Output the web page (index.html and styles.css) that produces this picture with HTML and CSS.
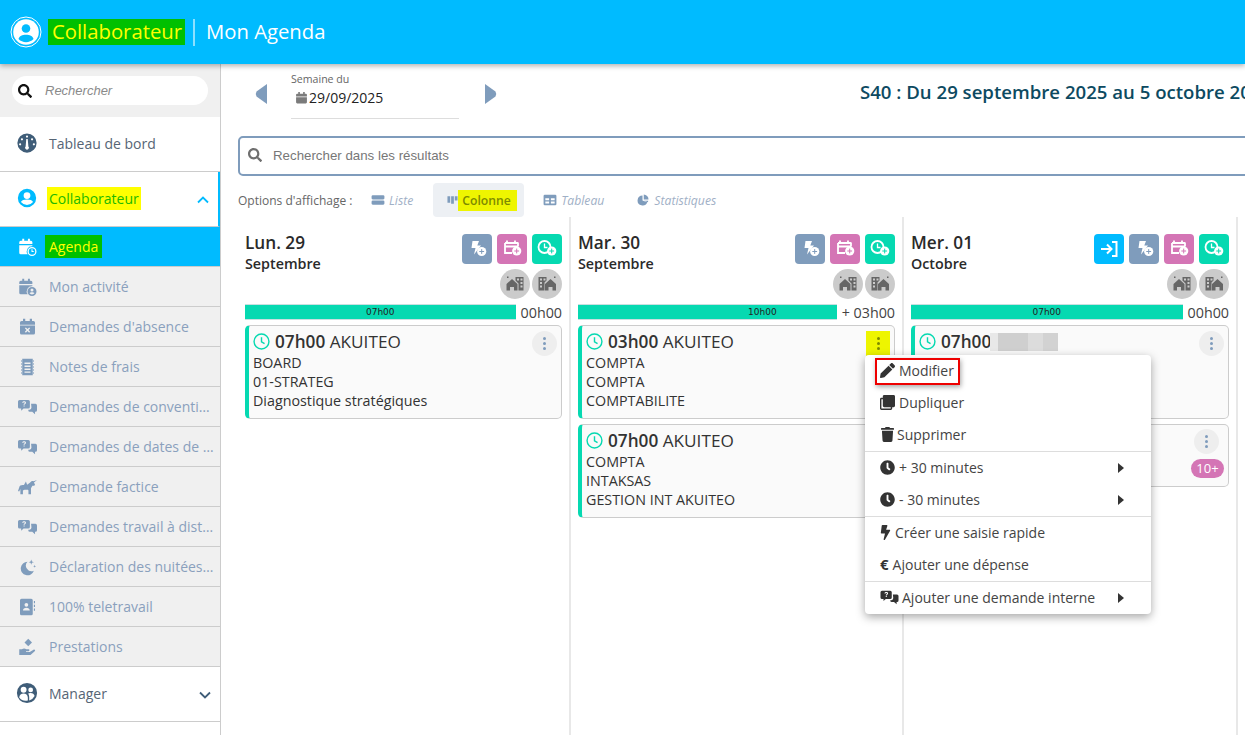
FILE: index.html
```html
<!DOCTYPE html>
<html lang="fr">
<head>
<meta charset="utf-8">
<title>Mon Agenda</title>
<link rel="stylesheet" href="styles.css">
</head>
<body>
<svg class="defs" width="0" height="0">
  <symbol id="i-search" viewBox="0 0 512 512"><path d="M505 442.7L405.3 343c-4.5-4.5-10.6-7-17-7H372c27.6-35.3 44-79.7 44-128C416 93.1 322.9 0 208 0S0 93.1 0 208s93.1 208 208 208c48.3 0 92.7-16.4 128-44v16.3c0 6.4 2.5 12.5 7 17l99.7 99.7c9.4 9.4 24.6 9.4 33.9 0l28.3-28.3c9.4-9.4 9.4-24.6.1-34zM208 336c-70.7 0-128-57.2-128-128 0-70.7 57.2-128 128-128 70.7 0 128 57.2 128 128 0 70.7-57.2 128-128 128z"/></symbol>
  <symbol id="i-user" viewBox="0 0 24 24"><path fill-rule="evenodd" d="M12 2a10 10 0 1 0 0 20 10 10 0 0 0 0-20zm0 3.6a3.7 3.7 0 1 1 0 7.4 3.7 3.7 0 0 1 0-7.4zM5.4 16.3c.6-2 3.3-2.8 6.6-2.8s6 .8 6.6 2.8a8.4 8.4 0 0 1-13.2 0z"/></symbol>
  <symbol id="i-gauge" viewBox="0 0 24 24"><path fill-rule="evenodd" d="M12 1.500a10.500 10.500 0 1 0 0 21 10.500 10.500 0 0 0 0-21zm0 2.300a1.200 1.200 0 1 1 0 2.400 1.200 1.200 0 0 1 0-2.400zM6.500 6.800a1.200 1.200 0 1 1 0 2.400 1.200 1.200 0 0 1 0-2.400zm11 0a1.200 1.200 0 1 1 0 2.400 1.200 1.200 0 0 1 0-2.400zM4.500 12.200a1.200 1.200 0 1 1 0 2.400 1.200 1.200 0 0 1 0-2.400zm15 0a1.200 1.200 0 1 1 0 2.400 1.200 1.200 0 0 1 0-2.400zM11.200 7.500h1.600l.7 8.200a2.100 2.100 0 1 1-3 0z"/></symbol>
  <symbol id="i-cal" viewBox="0 0 24 24"><path d="M6 1h3v3h6V1h3v3h2a2 2 0 0 1 2 2v3H2V6a2 2 0 0 1 2-2h2zM2 10.500h20V20a2 2 0 0 1-2 2H4a2 2 0 0 1-2-2z"/></symbol>
  <symbol id="i-calclock" viewBox="0 0 24 24"><path d="M5 1h2.600v2.500h5V1h2.600v2.500h1.300A2 2 0 0 1 18.500 5.500V8H1V5.500a2 2 0 0 1 2-2h2zM1 9.500h17.500V11a6.700 6.700 0 0 0-6.300 10.500H3a2 2 0 0 1-2-2z"/><path fill-rule="evenodd" d="M18 12a6 6 0 1 0 0 12 6 6 0 0 0 0-12zm0 1.700a4.300 4.300 0 1 1 0 8.600 4.300 4.300 0 0 1 0-8.600zm-.7 1.300v3.500h3v-1.300h-1.600V15z"/></symbol>
  <symbol id="i-caluser" viewBox="0 0 24 24"><path d="M5 1h2.600v2.500h5V1h2.600v2.500h1.300A2 2 0 0 1 18.500 5.500V8H1V5.500a2 2 0 0 1 2-2h2zM1 9.500h17.500V11a6.700 6.700 0 0 0-6.300 10.500H3a2 2 0 0 1-2-2z"/><path fill-rule="evenodd" d="M18 12a6 6 0 1 0 0 12 6 6 0 0 0 0-12zm0 2a2 2 0 1 1 0 4 2 2 0 0 1 0-4zm-3.300 6.400c.6-1.100 1.900-1.500 3.300-1.500s2.700.4 3.300 1.500a4.400 4.400 0 0 1-6.600 0z"/></symbol>
  <symbol id="i-calx" viewBox="0 0 24 24"><path fill-rule="evenodd" d="M6 1h3v3h6V1h3v3h2a2 2 0 0 1 2 2v3H2V6a2 2 0 0 1 2-2h2zM2 10h20v10a2 2 0 0 1-2 2H4a2 2 0 0 1-2-2zm7.800 2.500L8.500 13.800l2.200 2.200-2.200 2.200 1.300 1.300 2.200-2.200 2.200 2.200 1.300-1.300-2.200-2.200 2.200-2.200-1.300-1.300-2.200 2.200z"/></symbol>
  <symbol id="i-receipt" viewBox="0 0 24 24"><path fill-rule="evenodd" d="M5 1h14v22H5zm3 5v2h8V6zm0 4v2h8v-2zm0 4v2h8v-2zm0 4v1.500h8V18z"/><path d="M3.500 3h1v2h-1zm0 4h1v2h-1zm0 4h1v2h-1zm0 4h1v2h-1zm0 4h1v2h-1zm16-16h1v2h-1zm0 4h1v2h-1zm0 4h1v2h-1zm0 4h1v2h-1zm0 4h1v2h-1z"/></symbol>
  <symbol id="i-chat" viewBox="0 0 24 20"><path fill-rule="evenodd" d="M2 1h11a2 2 0 0 1 2 2v7a2 2 0 0 1-2 2H7l-3 2.600V12H2a2 2 0 0 1-2-2V3a2 2 0 0 1 2-2zm5.700 1.800C6.300 2.800 5.300 3.500 5.300 4.700h1.400c0-.4.400-.7 1-.7s1 .3 1 .7c0 .8-1.700.9-1.700 2.500h1.400c0-1 1.700-1.200 1.700-2.600 0-1.100-1-1.800-2.400-1.800zM7 8v1.400h1.400V8z"/><path d="M16.500 6H22a2 2 0 0 1 2 2v6a2 2 0 0 1-2 2h-.5v3l-3.500-3h-3a2 2 0 0 1-2-2v-.5h1.500a3 3 0 0 0 2.500-3z"/></symbol>
  <symbol id="i-unicorn" viewBox="0 0 24 20"><path d="M24 1l-4.200 1.700c-.8-.5-1.800-.6-2.800 0L15 4.500 11.500 7l-1.500-4-2.500 4.500H6C3.500 7.500 2 8.500 1.500 10.500L0 15l1.500.8L3 12.500V19h3.200v-4.500l2-1h4.300l.7 1V19h3.200v-7.500l1.800-3h2.300l1-1.500-1.300-2.600z"/></symbol>
  <symbol id="i-moon" viewBox="0 0 24 24"><path d="M12 5a9 9 0 1 0 8.500 12A7.500 7.500 0 0 1 12 5z"/><path d="M17 2l.9 2.600 2.600.9-2.600.9-.9 2.600-.9-2.600-2.600-.9 2.600-.9zM21.500 9l.5 1.500 1.500.5-1.500.5-.5 1.500-.5-1.500-1.500-.5 1.500-.5z"/></symbol>
  <symbol id="i-book" viewBox="0 0 24 24"><path fill-rule="evenodd" d="M4 1h13a2 2 0 0 1 2 2v18a2 2 0 0 1-2 2H4a2 2 0 0 1-2-2V3a2 2 0 0 1 2-2zm6.500 5.500a2.500 2.500 0 1 0 0 5 2.500 2.500 0 0 0 0-5zM6 16.500h9c0-2-2-3.500-4.500-3.500S6 14.500 6 16.500z"/><path d="M20.500 4H22v3h-1.500zm0 5H22v3h-1.500zm0 5H22v3h-1.500z"/></symbol>
  <symbol id="i-hand" viewBox="0 0 24 24"><path d="M13 1l5 5-5 5-5-5z"/><path d="M1 15h3.500c2-1.500 4-1.500 6 0h3c1.500 0 1.500 2.500 0 2.500H10v1h5l5-3c1.500-.8 3 1 1.600 2.200L16 22.500H1z"/></symbol>
  <symbol id="i-people" viewBox="0 0 24 24"><path fill-rule="evenodd" d="M12 1a11 11 0 1 0 0 22 11 11 0 0 0 0-22zM8.300 5.300a3.200 3.200 0 1 1 0 6.400 3.200 3.200 0 0 1 0-6.400zm7.700.7a2.600 2.600 0 1 1 0 5.200 2.600 2.600 0 0 1 0-5.200zM3.500 17c.2-3 2.200-4.500 4.800-4.500s4.400 1.500 4.600 4.500v3.200a9 9 0 0 1-9.400-3.200zM14.300 12.300c.5-.2 1.100-.3 1.700-.3 2.200 0 3.800 1.200 4.300 3.400a9 9 0 0 1-5.900 4.700V17c0-2-.3-3.500-1.300-4.200z"/></symbol>
  <symbol id="i-columns" viewBox="0 0 24 20"><path d="M1 2h6v14H1zm8 0h6v16H9zm8 0h6v9h-6z"/></symbol>
  <symbol id="i-list" viewBox="0 0 24 20"><rect x="1" y="2" width="22" height="7" rx="2"/><rect x="1" y="11" width="22" height="7" rx="2"/></symbol>
  <symbol id="i-table" viewBox="0 0 24 20"><path fill-rule="evenodd" d="M3 1h18a2 2 0 0 1 2 2v14a2 2 0 0 1-2 2H3a2 2 0 0 1-2-2V3a2 2 0 0 1 2-2zm1 6v3.500h6.500V7zm9.500 0v3.500H20V7zM4 12.500V16h6.500v-3.500zm9.500 0V16H20v-3.500z"/></symbol>
  <symbol id="i-pie" viewBox="0 0 24 24"><path d="M11 3a10 10 0 1 0 9.500 13.500L11 13z"/><path d="M13.500 1A10 10 0 0 1 23 11h-9.500z"/><path d="M14 13.500h8.500a10 10 0 0 1-1 3z"/></symbol>
  <symbol id="i-boltplus" viewBox="0 0 30 30"><path d="M10.500 7h6.500l-1.700 4.500h3.700L12 20.500l1.500-6.500H9.500z" fill="#fff"/><circle cx="19.700" cy="17.500" r="4.600" fill="#fff"/><path d="M17.300 17.500h4.800M19.700 15.100v4.800" stroke="#7f9cbc" stroke-width="1"/></symbol>
  <symbol id="i-calplus" viewBox="0 0 30 30"><path d="M10 6.500v3M18 6.500v3" stroke="#fff" stroke-width="1.800"/><path d="M8 9h13.500M8 12.500h13.500M8 9v10h7M21 9v3" fill="none" stroke="#fff" stroke-width="1.800"/><circle cx="19.700" cy="17" r="4.600" fill="#fff"/><path d="M17.300 17h4.800M19.700 14.600v4.800" stroke="#d475b5" stroke-width="1"/></symbol>
  <symbol id="i-clockplus" viewBox="0 0 30 30"><circle cx="12.500" cy="13" r="6" fill="none" stroke="#fff" stroke-width="1.800"/><path d="M12.500 9.500V13.500h3" fill="none" stroke="#fff" stroke-width="1.300"/><circle cx="19.700" cy="17" r="4.600" fill="#fff"/><path d="M17.300 17h4.800M19.700 14.600v4.800" stroke="#06d9b1" stroke-width="1"/></symbol>
  <symbol id="i-login" viewBox="0 0 30 30"><path d="M7 15h10M13 10.500l4.500 4.500-4.500 4.500M18 8h4.500v14H18" fill="none" stroke="#fff" stroke-width="2"/></symbol>
  <symbol id="i-homeoff" viewBox="0 0 30 30"><path d="M6.500 15l5.500-5 5.500 5v6.500h-3.500v-3.500h-4v3.500H6.500z"/><path d="M15.500 8h8v13.500h-5v-7L15.500 11.500z"/><path d="M17 9.500h2v2h-2zm3.500 0h2v2h-2zm0 3.500h2v2h-2zm0 3.500h2v2h-2z" fill="#cbcbcb"/><path d="M7 7.500h1.500V9H7z"/></symbol>
  <symbol id="i-offhome" viewBox="0 0 30 30"><path d="M6.500 8h8v3.500L12.500 13.500v8h-6z"/><path d="M8 9.500h2v2H8zm3.500 0h2v2h-2zM8 13h2v2H8zm0 3.500h2v2H8z" fill="#cbcbcb"/><path d="M13 15l5.500-5 5.500 5v6.500h-3.500v-3.500h-4v3.500H13z"/><path d="M22 7.500h1.500V9H22z"/></symbol>
  <symbol id="i-clock-o" viewBox="0 0 24 24"><circle cx="12" cy="12" r="10.500" fill="none" stroke="currentColor" stroke-width="2"/><path d="M12 6v6.500l4.300 2.600" fill="none" stroke="currentColor" stroke-width="2"/></symbol>
  <symbol id="i-pencil" viewBox="0 0 512 512"><path d="M497.900 142.100l-46.100 46.100c-4.700 4.700-12.300 4.700-17 0l-111-111c-4.700-4.700-4.700-12.300 0-17l46.100-46.100c18.700-18.700 49.100-18.700 67.900 0l60.100 60.100c18.800 18.700 18.800 49.100 0 67.900zM284.200 99.800L21.600 362.400.4 483.900c-2.900 16.400 11.400 30.600 27.800 27.800l121.500-21.300 262.600-262.600c4.700-4.700 4.700-12.300 0-17l-111-111c-4.800-4.700-12.400-4.700-17.100 0z"/></symbol>
  <symbol id="i-clone" viewBox="0 0 512 512"><path d="M464 0H144c-26.500 0-48 21.500-48 48v48H48c-26.500 0-48 21.500-48 48v320c0 26.500 21.500 48 48 48h320c26.500 0 48-21.500 48-48v-48h48c26.500 0 48-21.500 48-48V48c0-26.500-21.500-48-48-48zM362 464H54a6 6 0 0 1-6-6V150a6 6 0 0 1 6-6h42v224c0 26.500 21.500 48 48 48h224v42a6 6 0 0 1-6 6z"/></symbol>
  <symbol id="i-trash" viewBox="0 0 448 512"><path d="M432 32H312l-9.400-18.700A24 24 0 0 0 281.100 0H166.800a23.720 23.720 0 0 0-21.400 13.300L136 32H16A16 16 0 0 0 0 48v32a16 16 0 0 0 16 16h416a16 16 0 0 0 16-16V48a16 16 0 0 0-16-16zM53.200 467a48 48 0 0 0 47.900 45h245.800a48 48 0 0 0 47.900-45L416 128H32z"/></symbol>
  <symbol id="i-clock" viewBox="0 0 512 512"><path d="M256 8C119 8 8 119 8 256s111 248 248 248 248-111 248-248S393 8 256 8zm92.490 313l-20 25a16 16 0 0 1-22.490 2.500l-67-49.720a40 40 0 0 1-15-31.230V112a16 16 0 0 1 16-16h32a16 16 0 0 1 16 16v144l58 42.500a16 16 0 0 1 2.490 22.500z"/></symbol>
  <symbol id="i-bolt" viewBox="0 0 320 512"><path d="M296 160H180.600l42.600-129.800C227.200 15 215.700 0 200 0H56C44 0 33.800 8.900 32.200 20.800l-32 240C-1.700 275.200 9.500 288 24 288h118.700L96.600 482.500c-3.600 15.200 8 29.500 23.300 29.500 8.400 0 16.400-4.400 20.800-12l176-304c9.300-15.900-2.200-36-20.700-36z"/></symbol>
</svg>

<header class="topbar">
  <svg class="logo" viewBox="0 0 32 32"><circle cx="16" cy="16" r="15" fill="none" stroke="#fff" stroke-width="1"/><circle cx="16" cy="16" r="12.800" fill="#fff"/><circle cx="16" cy="12.500" r="4.300" fill="#00bbff"/><path d="M8.500 23c.8-3 3.800-4.300 7.500-4.300s6.700 1.300 7.500 4.300a10.500 10.500 0 0 1-15 0z" fill="#00bbff"/></svg>
  <span class="top-module">Collaborateur</span>
  <span class="top-sep"></span>
  <span class="top-title">Mon Agenda</span>
</header>

<div class="layout">
  <aside class="sidebar">
    <div class="side-search">
      <div class="side-search-box">
        <svg class="ico14 black"><use href="#i-search"/></svg>
        <span class="side-search-text">Rechercher</span>
      </div>
    </div>
    <nav>
      <div class="nav-main"><svg class="nav-ico dark"><use href="#i-gauge"/></svg><span>Tableau de bord</span></div>
      <div class="nav-main nav-open">
        <svg class="nav-ico cyan"><use href="#i-user"/></svg>
        <span class="hl-yellow-green">Collaborateur</span>
        <svg class="chev" viewBox="0 0 12 8"><path d="M1 6.500l5-5 5 5" fill="none" stroke="#00bbff" stroke-width="1.800"/></svg>
      </div>
      <div class="nav-sub nav-active"><svg class="sub-ico"><use href="#i-calclock"/></svg><span class="hl-green">Agenda</span></div>
      <div class="nav-sub"><svg class="sub-ico"><use href="#i-caluser"/></svg><span>Mon activité</span></div>
      <div class="nav-sub"><svg class="sub-ico"><use href="#i-calx"/></svg><span>Demandes d'absence</span></div>
      <div class="nav-sub"><svg class="sub-ico"><use href="#i-receipt"/></svg><span>Notes de frais</span></div>
      <div class="nav-sub"><svg class="sub-ico"><use href="#i-chat"/></svg><span class="ellip">Demandes de conventions</span></div>
      <div class="nav-sub"><svg class="sub-ico"><use href="#i-chat"/></svg><span class="ellip">Demandes de dates de formation</span></div>
      <div class="nav-sub"><svg class="sub-ico"><use href="#i-unicorn"/></svg><span>Demande factice</span></div>
      <div class="nav-sub"><svg class="sub-ico"><use href="#i-chat"/></svg><span class="ellip">Demandes travail à distance</span></div>
      <div class="nav-sub"><svg class="sub-ico"><use href="#i-moon"/></svg><span class="ellip">Déclaration des nuitées hors</span></div>
      <div class="nav-sub"><svg class="sub-ico"><use href="#i-book"/></svg><span>100% teletravail</span></div>
      <div class="nav-sub"><svg class="sub-ico"><use href="#i-hand"/></svg><span>Prestations</span></div>
      <div class="nav-main">
        <svg class="nav-ico dark"><use href="#i-people"/></svg><span>Manager</span>
        <svg class="chev" viewBox="0 0 12 8"><path d="M1 1.500l5 5 5-5" fill="none" stroke="#3f5d78" stroke-width="1.800"/></svg>
      </div>
    </nav>
  </aside>

  <main class="content">
    <div class="week-bar">
      <svg class="week-arrow" viewBox="0 0 12 20"><path d="M12 0v20L1.500 12.500Q0 10 1.500 7.500z"/></svg>
      <div class="week-field">
        <div class="week-label">Semaine du</div>
        <div class="week-date"><svg class="ico13 gray"><use href="#i-cal"/></svg>29/09/2025</div>
      </div>
      <svg class="week-arrow" viewBox="0 0 12 20"><path d="M0 0v20l10.500-7.500Q12 10 10.500 7.500z"/></svg>
      <h1 class="week-title">S40 : Du 29 septembre 2025 au 5 octobre 2025</h1>
    </div>

    <div class="result-search">
      <svg class="ico14 graysearch"><use href="#i-search"/></svg>
      <span>Rechercher dans les résultats</span>
    </div>

    <div class="view-options">
      <span class="view-label">Options d'affichage :</span>
      <span class="view-tab"><svg class="view-ico"><use href="#i-list"/></svg><i>Liste</i></span>
      <span class="view-tab view-on"><svg class="view-ico"><use href="#i-columns"/></svg><b>Colonne</b></span>
      <span class="view-tab"><svg class="view-ico"><use href="#i-table"/></svg><i>Tableau</i></span>
      <span class="view-tab"><svg class="view-ico"><use href="#i-pie"/></svg><i>Statistiques</i></span>
    </div>

    <div class="columns">
      <section class="col">
        <div class="col-head">
          <div class="col-date"><div class="col-day">Lun. 29</div><div class="col-month">Septembre</div></div>
          <div class="col-actions">
            <div class="btn-row">
              <span class="sq slate"><svg><use href="#i-boltplus"/></svg></span>
              <span class="sq pink"><svg><use href="#i-calplus"/></svg></span>
              <span class="sq teal"><svg><use href="#i-clockplus"/></svg></span>
            </div>
            <div class="btn-row gap2">
              <span class="rd"><svg><use href="#i-homeoff"/></svg></span>
              <span class="rd"><svg><use href="#i-offhome"/></svg></span>
            </div>
          </div>
        </div>
        <div class="progress"><div class="bar">07h00</div><span class="bar-val">00h00</span></div>
        <article class="card">
          <div class="card-top"><svg class="card-clock"><use href="#i-clock-o"/></svg><b>07h00</b> AKUITEO</div>
          <div>BOARD</div><div>01-STRATEG</div><div>Diagnostique stratégiques</div>
          <span class="dots"><i></i><i></i><i></i></span>
        </article>
      </section>

      <section class="col">
        <div class="col-head">
          <div class="col-date"><div class="col-day">Mar. 30</div><div class="col-month">Septembre</div></div>
          <div class="col-actions">
            <div class="btn-row">
              <span class="sq slate"><svg><use href="#i-boltplus"/></svg></span>
              <span class="sq pink"><svg><use href="#i-calplus"/></svg></span>
              <span class="sq teal"><svg><use href="#i-clockplus"/></svg></span>
            </div>
            <div class="btn-row gap2">
              <span class="rd"><svg><use href="#i-homeoff"/></svg></span>
              <span class="rd"><svg><use href="#i-offhome"/></svg></span>
            </div>
          </div>
        </div>
        <div class="progress"><div class="bar bar-over">10h00</div><span class="bar-val">+ 03h00</span></div>
        <article class="card">
          <div class="card-top"><svg class="card-clock"><use href="#i-clock-o"/></svg><b>03h00</b> AKUITEO</div>
          <div>COMPTA</div><div>COMPTA</div><div>COMPTABILITE</div>
          <span class="dots dots-hl"><i></i><i></i><i></i></span>
        </article>
        <article class="card">
          <div class="card-top"><svg class="card-clock"><use href="#i-clock-o"/></svg><b>07h00</b> AKUITEO</div>
          <div>COMPTA</div><div>INTAKSAS</div><div>GESTION INT AKUITEO</div>
        </article>
      </section>

      <section class="col">
        <div class="col-head">
          <div class="col-date"><div class="col-day">Mer. 01</div><div class="col-month">Octobre</div></div>
          <div class="col-actions">
            <div class="btn-row">
              <span class="sq cyanbg"><svg><use href="#i-login"/></svg></span>
              <span class="sq slate"><svg><use href="#i-boltplus"/></svg></span>
              <span class="sq pink"><svg><use href="#i-calplus"/></svg></span>
              <span class="sq teal"><svg><use href="#i-clockplus"/></svg></span>
            </div>
            <div class="btn-row gap2">
              <span class="rd"><svg><use href="#i-homeoff"/></svg></span>
              <span class="rd"><svg><use href="#i-offhome"/></svg></span>
            </div>
          </div>
        </div>
        <div class="progress"><div class="bar">07h00</div><span class="bar-val">00h00</span></div>
        <article class="card">
          <div class="card-top"><svg class="card-clock"><use href="#i-clock-o"/></svg><b>07h00</b> <span class="blurred"></span></div>
          <span class="dots"><i></i><i></i><i></i></span>
        </article>
        <article class="card card-small">
          <span class="dots dots-small"><i></i><i></i><i></i></span>
          <span class="badge">10+</span>
        </article>
      </section>

      <section class="col col-last"><div class="col-day">-</div></section>
    </div>

    <div class="menu">
      <div class="menu-row menu-mark"><span class="mark-box"><svg class="m-ico"><use href="#i-pencil"/></svg>Modifier</span></div>
      <div class="menu-row"><svg class="m-ico"><use href="#i-clone"/></svg>Dupliquer</div>
      <div class="menu-row"><svg class="m-ico m-narrow"><use href="#i-trash"/></svg>Supprimer</div>
      <div class="menu-line"></div>
      <div class="menu-row"><svg class="m-ico"><use href="#i-clock"/></svg>+ 30 minutes<span class="caret"></span></div>
      <div class="menu-row"><svg class="m-ico"><use href="#i-clock"/></svg>- 30 minutes<span class="caret"></span></div>
      <div class="menu-line"></div>
      <div class="menu-row"><svg class="m-ico m-bolt"><use href="#i-bolt"/></svg>Créer une saisie rapide</div>
      <div class="menu-row"><b class="euro">€</b>Ajouter une dépense</div>
      <div class="menu-line"></div>
      <div class="menu-row"><svg class="m-ico m-chat"><use href="#i-chat"/></svg>Ajouter une demande interne<span class="caret"></span></div>
    </div>
  </main>
</div>
</body>
</html>
```
FILE: styles.css
```css
* { box-sizing: border-box; }
html, body { margin: 0; height: 100%; overflow: hidden; }
body { font-family: "Open Sans", sans-serif; font-size: 14px; color: #333; background: #fff; width: 1245px; height: 735px; position: relative; }
.defs { position: absolute; }
svg { fill: currentColor; display: block; flex: none; }

.topbar { height: 64px; background: #00bbff; display: flex; align-items: center; padding-left: 10px; color: #fff; box-shadow: 0 2px 5px rgba(0,0,0,.3); position: relative; z-index: 3; }
.logo { width: 32px; height: 32px; margin-right: 6px; }
.top-module { background: #00c000; color: #ffff00; font-size: 20.300px; line-height: 25px; padding: 0 0 1px 4px; width: 137px; white-space: nowrap; }
.top-sep { width: 2px; height: 27px; background: rgba(255,255,255,.55); margin: 0 11px 0 8px; }
.top-title { font-size: 20.300px; margin-top: -2px; }

.layout { display: flex; height: 671px; }
.sidebar { width: 221px; flex: none; border-right: 1px solid #ccc; background: #fff; height: 671px; overflow: hidden; }
.side-search { height: 53px; background: #f0f0f0; padding: 12px 12px 0; }
.side-search-box { height: 29px; width: 196px; background: #fff; border-radius: 15px; display: flex; align-items: center; padding-left: 6px; }
.side-search-text { font-family: "Liberation Sans", sans-serif; font-style: italic; font-size: 13px; color: #8a8a8a; margin-left: 13px; }
.ico14 { width: 14px; height: 14px; }
.ico13 { width: 13px; height: 14px; }
.black { color: #111; }
.gray { color: #7b7b7b; }
.graysearch { color: #6f6f6f; }

.nav-main { height: 55px; display: flex; align-items: center; padding-left: 16px; color: #566575; border-bottom: 1px solid #ccc; font-size: 14px; position: relative; padding-bottom: 2px; }
.nav-open { color: #00bbff; border-right: 2px solid #00bbff; }
.nav-ico { width: 22px; height: 22px; margin-right: 11px; }
.dark { color: #3f5d78; }
.cyan { color: #00bbff; }
.chev { width: 12px; height: 8px; position: absolute; right: 9px; top: 24px; }
.hl-yellow-green { background: #ffff00; color: #22b800; margin-left: -2px; padding: 0 2px; line-height: 23px; }
.nav-sub { height: 40px; display: flex; align-items: center; background: #f0f0f0; color: #8aa0bd; padding-left: 18px; border-bottom: 1px solid #ccc; font-size: 14px; }
.sub-ico { width: 19px; height: 18px; margin-right: 12px; color: #7f9cbc; }
.nav-active { background: #00bbff; height: 40px; border-bottom-color: #ccc; }
.nav-active .sub-ico { color: #fff; }
.hl-green { background: #00c000; color: #ffff00; margin-left: -4px; padding: 0 4px; line-height: 23px; }
.ellip { width: 165px; white-space: nowrap; overflow: hidden; text-overflow: ellipsis; }

.content { flex: 1; min-width: 0; padding-left: 17px; position: relative; overflow: hidden; }
.week-bar { height: 72px; display: flex; align-items: flex-start; white-space: nowrap; padding-left: 17px; }
.week-arrow { width: 12px; height: 20px; color: #7f9cbc; margin-top: 20px; flex: none; }
.week-field { flex: none; width: 168px; height: 55px; border-bottom: 1px solid #ddd; margin: 0 26px 0 24px; padding-top: 8px; }
.week-label { font-size: 10.600px; color: #666; line-height: 14px; }
.week-date { display: flex; align-items: center; gap: 1px; font-size: 14px; color: #222; line-height: 24px; padding-left: 4px; }
.week-title { flex: none; margin: 16px 0 0 363px; font-size: 18.600px; font-weight: 600; color: #0d4a61; line-height: 24px; }
.result-search { width: 1100px; height: 40px; border: 2px solid #7f9cbc; border-radius: 5px; display: flex; align-items: center; padding: 0 0 2px 8px; gap: 11px; font-family: "Liberation Sans", sans-serif; font-size: 13.300px; color: #777; }
.view-options { height: 34px; margin-top: 7px; display: flex; align-items: center; font-size: 12px; color: #666; }
.view-label { width: 126px; white-space: nowrap; }
.view-tab { display: flex; align-items: center; height: 34px; padding: 0 7px; gap: 4px; color: #9fb0c6; }
.view-tab i { font-size: 12.200px; }
.view-tab:nth-child(2) { margin-right: 13px; }
.view-tab:nth-child(4) { margin: 0 18px 0 12px; }
.view-ico { width: 14px; height: 12px; color: #7f9cbc; }
.view-on { background: #edf0f4; border-radius: 4px; width: 91px; padding-left: 14px; gap: 0; }
.view-on .view-ico { width: 11px; }
.view-on b { background: #eef500; color: #7d8a00; font-weight: 600; font-size: 12.200px; padding: 3px 6px 3px 4px; line-height: 15px; }

.columns { display: flex; width: 1340px; height: 518px; }
.col { width: 333px; flex: none; padding: 17px 7px 0; border-right: 2px solid #e8e8e8; }
.col:nth-child(3) { width: 334px; }
.col-last { border: 0; }
.col-head { display: flex; justify-content: space-between; height: 70px; }
.col-date { margin-top: -1px; }
.col-day { font-size: 17.200px; font-weight: 600; color: #2a2a2a; line-height: 20px; }
.col-month { font-size: 14.300px; font-weight: 600; color: #2a2a2a; line-height: 22px; }
.col-actions { display: flex; flex-direction: column; gap: 5px; align-items: flex-end; }
.btn-row { display: flex; gap: 5px; }
.gap2 { gap: 2px; }
.sq { width: 30px; height: 30px; border-radius: 4px; display: flex; align-items: center; justify-content: center; }
.sq svg { width: 30px; height: 30px; }
.slate { background: #7f9cbc; }
.pink { background: #d475b5; }
.teal { background: #06d9b1; }
.cyanbg { background: #00bbff; }
.rd { width: 30px; height: 30px; border-radius: 50%; background: #cbcbcb; display: flex; align-items: center; justify-content: center; color: #666; }
.rd svg { width: 30px; height: 30px; }
.progress { display: flex; align-items: center; justify-content: space-between; height: 16px; margin-bottom: 5px; }
.bar { flex: 1; height: 16px; background: #06d9b1; font-family: "DejaVu Sans", sans-serif; font-size: 9px; line-height: 14px; text-align: center; color: #222; border: 1px solid #c9dfe0; border-width: 1px 0; }
.bar-over { text-align: left; padding-left: 170px; }
.bar-val { font-size: 14.300px; color: #444; margin-left: 5px; }
.card { position: relative; height: 94px; margin-bottom: 5px; background: #fafafa; border: 1px solid #ccc; border-left: 4px solid #06d9b1; border-radius: 5px; padding: 4px 0 0 4px; font-size: 14.300px; line-height: 19px; color: #333; }
.card-top { display: flex; align-items: center; font-size: 17.200px; line-height: 24px; height: 23px; white-space: pre; }
.card-top b { font-weight: 600; }
.card-clock { width: 17px; height: 17px; color: #06d9b1; margin-right: 5px; }
.blurred { display: inline-block; width: 68px; height: 18px; margin-left: -1px; background: linear-gradient(90deg,#e8e8e8 0 8px,#cfcfcf 8px 38px,#dcdcdc 38px 53px,#d2d2d2 53px 68px); }
.dots { position: absolute; right: 4px; top: 5px; width: 25px; height: 25px; border-radius: 50%; background: #eee; display: flex; flex-direction: column; align-items: center; justify-content: center; gap: 2px; }
.dots i { width: 3px; height: 3px; border-radius: 50%; background: #7f9cbc; }
.dots-hl { border-radius: 0; background: #eef500; width: 24px; }
.dots-hl i { background: #7d8a00; }
.card-small { height: 63px; }
.dots-small { right: 9px; top: 4px; }
.badge { position: absolute; right: 4px; top: 34px; width: 33px; height: 19px; border-radius: 10px; background: #d475b5; color: #fff; font-size: 13px; line-height: 19px; text-align: center; }

.menu { position: absolute; left: 644px; top: 291px; width: 286px; height: 259px; background: #fff; border-radius: 4px; box-shadow: 0 3px 10px rgba(0,0,0,.35); z-index: 5; color: #444; font-size: 14px; }
.menu-row { height: 32px; display: flex; align-items: center; padding: 0 0 2px 15px; position: relative; white-space: nowrap; }
.menu-line { height: 1px; background: #ddd; }
.m-ico { width: 15px; height: 15px; margin-right: 4px; color: #333; }
.m-narrow { width: 13px; margin-right: 3px; margin-left: 1px; }
.m-bolt { width: 11px; margin-right: 4px; }
.m-chat { width: 19px; margin-right: 3px; }
.euro { color: #333; font-size: 15px; margin-right: 4px; font-weight: 700; }
.caret { position: absolute; right: 27px; top: 11px; width: 0; height: 0; border-left: 6px solid #333; border-top: 5px solid transparent; border-bottom: 5px solid transparent; }
.mark-box { position: absolute; left: 10px; top: 3px; width: 85px; height: 27px; border: 2px solid #e00; box-shadow: 1px 2px 5px rgba(0,0,0,.35); display: flex; align-items: center; padding: 0 0 2px 3px; }
```
